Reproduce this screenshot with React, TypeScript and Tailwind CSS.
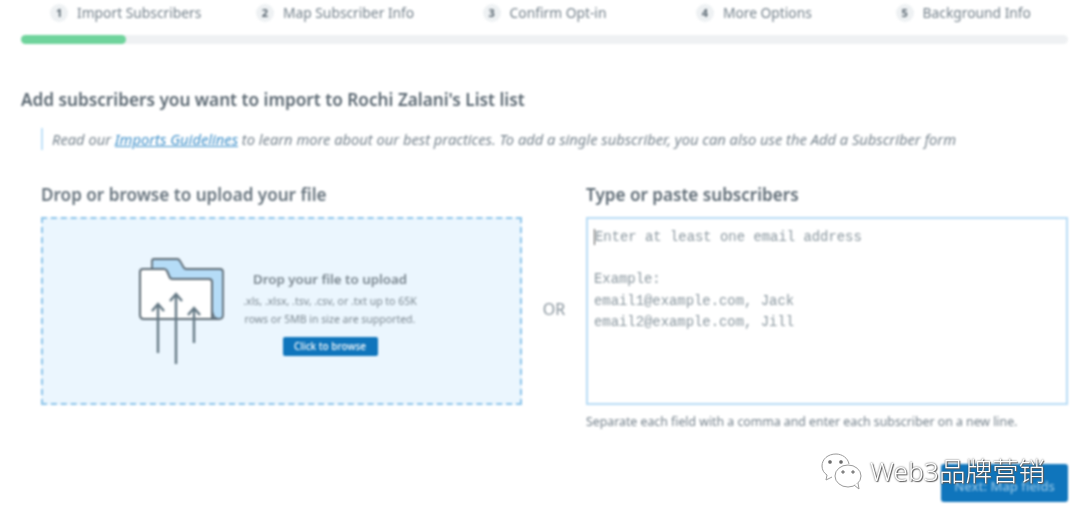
import React from "react";

const steps = ["Import Subscribers", "Map Subscriber Info", "Confirm Opt-in", "More Options", "Background Info"];

function Folder() {
  return (
    <svg width="88" height="112" viewBox="140 255 88 112" fill="none" className="shrink-0">
      <path d="M153 269v-8q0-2 2-2h23q2 0 3 2l4 7q1 1 3 1h33q3 0 3 3v43q0 4-4 4h-10z" fill="#b5dcf7" stroke="#5d6b75" strokeWidth="1.8" strokeLinejoin="round" />
      <path d="M141 272q0-3 3-3h21q2 0 3 2l3 7q1 1 3 1h36q3 0 3 3v37H145q-4 0-4-4z" fill="#ffffff" stroke="#5d6b75" strokeWidth="2" strokeLinejoin="round" />
      <path d="M213 308q0 11 7 11" stroke="#5d6b75" strokeWidth="1.6" fill="none" />
      <g stroke="#647884" strokeWidth="2.4" fill="none">
        <path d="M159 304v49M153 311l6-7 6 7" />
        <path d="M177 294v70M171 301l6-7 6 7" />
        <path d="M195 308v35M189 315l6-7 6 7" />
      </g>
    </svg>
  );
}

function WeChat() {
  return (
    <svg width="44" height="40" viewBox="0 0 44 40" fill="none" stroke="#9a9a9a" strokeWidth="1" className="shrink-0">
      <path d="M29 13C28 7 22 3 16 3 8 3 2 8 2 15c0 4 2 7 5 9l-1 5 6-3" fill="#fff" />
      <ellipse cx="28" cy="25" rx="13" ry="11" fill="#fff" />
      <path d="M34 34l5 4-1-6" fill="#fff" />
      <circle cx="10" cy="11" r="1.6" fill="#666" />
      <circle cx="21" cy="11" r="1.6" fill="#666" />
      <circle cx="23" cy="21" r="1.3" fill="#666" />
      <circle cx="33" cy="21" r="1.3" fill="#666" />
    </svg>
  );
}

export default function App() {
  return (
    <div className="relative w-[1080px] h-[520px] overflow-hidden bg-white font-['Noto_Sans',sans-serif] text-[#5e6b75]">
      <div className="h-[520px] pl-[21px] pr-[12px] blur-[0.9px]">
        <div className="grid grid-cols-5 h-[28px] items-center -translate-y-px">
          {steps.map((s, i) => (
            <div key={s} className="flex items-center justify-center gap-[9px]">
              <span className="w-[18px] h-[18px] rounded-full bg-[#eef1f3] text-[11px] font-bold flex items-center justify-center">{i + 1}</span>
              <span className="text-[13.8px] text-[#74818b]">{s}</span>
            </div>
          ))}
        </div>
        <div className="mt-[7px] h-[9px] rounded-full bg-[#eff1f3]">
          <div className="h-[9px] w-[105px] rounded-full bg-[#6fd49c]" />
        </div>
        <h1 className="mt-[44px] h-[24px] leading-[24px] text-[17.2px] font-semibold text-[#5a6771]">Add subscribers you want to import to Rochi Zalani's List list</h1>
        <p className="ml-[20px] mt-[16px] h-[22px] border-l-2 border-[#bfe1f8] pl-[9px] text-[14.7px] leading-[22px] italic whitespace-nowrap text-[#77848e]">
          Read our <a className="text-[#3d8fc9] underline">Imports Guidelines</a> to learn more about our best practices. To add a single subscriber, you can also use the Add a Subscriber form
        </p>
        <div className="ml-[20px] mt-[33px] flex">
          <div className="w-[481px] shrink-0">
            <h2 className="h-[24px] leading-[24px] text-[17.1px] font-semibold text-[#66737d]">Drop or browse to upload your file</h2>
            <div className="mt-[10px] h-[188px] border-2 border-dashed border-[#8cc4ea] bg-[#ebf6fe] pr-[6px] flex items-center justify-center gap-[15px]">
              <Folder />
              <div className="w-[177px] flex flex-col items-center mt-[4px]">
                <div className="text-[13.3px] font-semibold text-[#79858e] leading-[18px]">Drop your file to upload</div>
                <div className="mt-[4px] text-[10.5px] leading-[18px] text-[#7d8992] text-center whitespace-nowrap">
                  .xls, .xlsx, .tsv, .csv, or .txt up to 65K<br />rows or 5MB in size are supported.
                </div>
                <button className="mt-[9px] h-[19px] w-[95px] rounded-[2px] bg-[#0f75bc] text-[10px] font-medium text-white">Click to browse</button>
              </div>
            </div>
          </div>
          <div className="w-[64px] shrink-0 mt-[32px] h-[188px] flex items-center justify-center text-[16px] text-[#87939c]">OR</div>
          <div className="w-[482px] shrink-0">
            <h2 className="h-[24px] leading-[24px] text-[17.1px] font-semibold text-[#5e6b75]">Type or paste subscribers</h2>
            <div className="mt-[10px] h-[188px] border-2 border-[#b7dcf5] px-[6px] pt-[8px] font-['Liberation_Mono',monospace] text-[13.9px] leading-[21.2px] text-[#8a979f]">
              <span className="border-l border-[#555]">Enter at least one email address</span>
              <br /><br />Example:<br />email1@example.com, Jack<br />email2@example.com, Jill
            </div>
            <div className="mt-[8px] h-[18px] text-[12.3px] leading-[18px] whitespace-nowrap text-[#74818b]">Separate each field with a comma and enter each subscriber on a new line.</div>
            <div className="mt-[33px] flex justify-end">
              <button className="h-[38px] w-[127px] rounded-[3px] bg-[#0f75bc] pt-[8px] text-[13px] font-medium text-[#8fc2e4]">Next: Map fields</button>
            </div>
          </div>
        </div>
      </div>
      <div className="absolute left-[820px] top-[451px] flex items-center gap-[6px] blur-[0.3px]">
        <WeChat />
        <span className="text-[26.5px] leading-[40px] font-light text-white font-['Noto_Sans','Noto_Sans_CJK_SC',sans-serif] [text-shadow:0_0_2px_#444,1px_1px_1px_#666]">Web3品牌营销</span>
      </div>
    </div>
  );
}
